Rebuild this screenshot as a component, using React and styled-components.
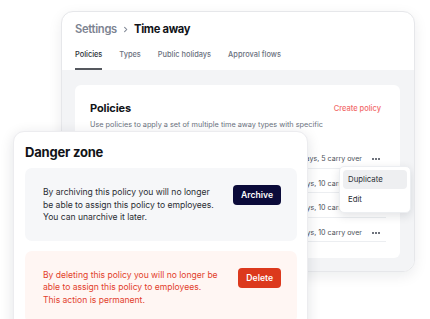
import React from "react";
import styled, { createGlobalStyle } from "styled-components";

const GlobalStyle = createGlobalStyle`
  html, body { margin: 0; padding: 0; background: #ffffff; }
  body { font-family: Inter, "Noto Sans", sans-serif; -webkit-font-smoothing: antialiased; }
  * { box-sizing: border-box; }
`;

const Stage = styled.div`
  position: relative;
  width: 430px;
  height: 319px;
  overflow: hidden;
  padding: 11px 0 0 61px;
  background: #ffffff;
`;

const SettingsWindow = styled.div`
  width: 354px;
  height: 261px;
  border: 1px solid #e6e7ea;
  border-radius: 12px;
  background: #ffffff;
  box-shadow: 0 4px 14px rgba(17, 24, 39, 0.08);
  display: flex;
  flex-direction: column;
  overflow: hidden;
`;

const Header = styled.div`
  padding: 9px 14px 0 13px;
`;

const Breadcrumb = styled.div`
  display: flex;
  align-items: center;
  gap: 4px;
  height: 16px;
  font-size: 11.2px;
  font-weight: 600;
  letter-spacing: -0.3px;
`;

const Crumb = styled.span`
  color: ${(p) => (p.$current ? "#111318" : "#7c8391")};
  font-weight: ${(p) => (p.$current ? 700 : 600)};
`;

const Chevron = styled.svg`
  width: 7px;
  height: 7px;
  margin: 1px 1px 0;
`;

const Tabs = styled.div`
  display: flex;
  gap: 17px;
  margin-top: 13px;
`;

const Tab = styled.div`
  font-size: 7.4px;
  line-height: 10px;
  font-weight: 500;
  padding-bottom: 8px;
  color: ${(p) => (p.$active ? "#2b2f36" : "#6b7280")};
  border-bottom: 2px solid ${(p) => (p.$active ? "#55585e" : "transparent")};
`;

const Content = styled.div`
  flex: 1;
  background: #f3f4f6;
  padding: 15px 14px 13px 13px;
`;

const PoliciesCard = styled.div`
  height: 100%;
  background: #ffffff;
  border-radius: 6px;
  padding: 16px 14px 0 15px;
`;

const CardHead = styled.div`
  display: flex;
  align-items: center;
  justify-content: space-between;
  padding-right: 5px;
`;

const CardTitle = styled.div`
  font-size: 11px;
  font-weight: 700;
  color: #111318;
  letter-spacing: -0.1px;
`;

const LinkButton = styled.div`
  font-size: 7.5px;
  font-weight: 500;
  color: #f26b6b;
`;

const Description = styled.div`
  margin-top: 5px;
  font-size: 7.3px;
  line-height: 10px;
  color: #6b7280;
`;

const PolicyList = styled.div`
  margin-top: 14px;
`;

const PolicyRow = styled.div`
  display: flex;
  align-items: center;
  justify-content: flex-end;
  height: 24.6px;
  padding-top: 6px;
  border-bottom: 1px solid #eceef1;
`;

const RowRight = styled.div`
  display: flex;
  align-items: center;
  gap: 4px;
`;

const Allowance = styled.span`
  font-size: 7.1px;
  color: #4b5058;
`;

const DotsButton = styled.div`
  position: relative;
  width: 20px;
  height: 10px;
  display: flex;
  align-items: center;
  justify-content: center;
  gap: 1.4px;
`;

const Dot = styled.span`
  width: 2px;
  height: 2px;
  border-radius: 50%;
  background: #3f4552;
`;

const Menu = styled.div`
  position: absolute;
  top: 12px;
  right: -25px;
  width: 72px;
  padding: 3px;
  background: #ffffff;
  border: 1px solid #eceef1;
  border-radius: 5px;
  box-shadow: 0 3px 10px rgba(17, 24, 39, 0.12);
  z-index: 2;
`;

const MenuItem = styled.div`
  height: 19px;
  display: flex;
  align-items: center;
  padding-left: 5px;
  border-radius: 4px;
  font-size: 7.8px;
  color: #2b2f36;
  background: ${(p) => (p.$highlighted ? "#eeeff1" : "transparent")};
  & + & { margin-top: 1px; }
`;

const DangerCard = styled.div`
  position: absolute;
  left: 13px;
  top: 131px;
  width: 295px;
  height: 210px;
  background: #ffffff;
  border: 1px solid #ececef;
  border-radius: 11px;
  box-shadow: 0 3px 14px rgba(17, 24, 39, 0.12);
  padding: 12px 10px 0 11px;
  display: flex;
  flex-direction: column;
  gap: 10px;
  z-index: 3;
`;

const DangerTitle = styled.div`
  font-size: 13px;
  line-height: 16px;
  font-weight: 700;
  color: #111318;
  letter-spacing: -0.2px;
  margin-bottom: -2px;
`;

const ActionBox = styled.div`
  display: flex;
  align-items: flex-start;
  justify-content: space-between;
  padding: 17px 16px 17px 18px;
  border-radius: 7px;
  background: ${(p) => (p.$danger ? "#fff6f3" : "#f6f7f9")};
`;

const ActionText = styled.p`
  margin: 1px 0 0;
  font-size: 8.55px;
  line-height: 12.5px;
  color: ${(p) => (p.$danger ? "#e2402c" : "#2a2d33")};
`;

const ActionButton = styled.button`
  border: none;
  height: 20px;
  padding: 0 8px;
  border-radius: 4px;
  font-family: inherit;
  font-size: 8.6px;
  font-weight: 600;
  color: #ffffff;
  background: ${(p) => (p.$danger ? "#dc391d" : "#0b0b3a")};
`;

const policies = [
  { id: 1, allowance: "20 days, 5 carry over", menu: true },
  { id: 2, allowance: "25 days, 10 carry over" },
  { id: 3, allowance: "25 days, 10 carry over" },
  { id: 4, allowance: "25 days, 10 carry over" },
];

export default function App() {
  return (
    <>
      <GlobalStyle />
      <Stage>
        <SettingsWindow>
          <Header>
            <Breadcrumb>
              <Crumb>Settings</Crumb>
              <Chevron viewBox="0 0 8 8">
                <path d="M3 1.5 L5.5 4 L3 6.5" fill="none" stroke="#7c8391" strokeWidth="1.2" strokeLinecap="round" strokeLinejoin="round" />
              </Chevron>
              <Crumb $current>Time away</Crumb>
            </Breadcrumb>
            <Tabs>
              <Tab $active>Policies</Tab>
              <Tab>Types</Tab>
              <Tab>Public holidays</Tab>
              <Tab>Approval flows</Tab>
            </Tabs>
          </Header>
          <Content>
            <PoliciesCard>
              <CardHead>
                <CardTitle>Policies</CardTitle>
                <LinkButton>Create policy</LinkButton>
              </CardHead>
              <Description>Use policies to apply a set of multiple time away types with specific</Description>
              <PolicyList>
                {policies.map((p) => (
                  <PolicyRow key={p.id}>
                    <RowRight>
                      <Allowance>{p.allowance}</Allowance>
                      <DotsButton>
                        <Dot />
                        <Dot />
                        <Dot />
                        {p.menu && (
                          <Menu>
                            <MenuItem $highlighted>Duplicate</MenuItem>
                            <MenuItem>Edit</MenuItem>
                          </Menu>
                        )}
                      </DotsButton>
                    </RowRight>
                  </PolicyRow>
                ))}
              </PolicyList>
            </PoliciesCard>
          </Content>
        </SettingsWindow>

        <DangerCard>
          <DangerTitle>Danger zone</DangerTitle>
          <ActionBox>
            <ActionText>
              By archiving this policy you will no longer
              <br />
              be able to assign this policy to employees.
              <br />
              You can unarchive it later.
            </ActionText>
            <ActionButton>Archive</ActionButton>
          </ActionBox>
          <ActionBox $danger>
            <ActionText $danger>
              By deleting this policy you will no longer be
              <br />
              able to assign this policy to employees.
              <br />
              This action is permanent.
            </ActionText>
            <ActionButton $danger>Delete</ActionButton>
          </ActionBox>
        </DangerCard>
      </Stage>
    </>
  );
}
